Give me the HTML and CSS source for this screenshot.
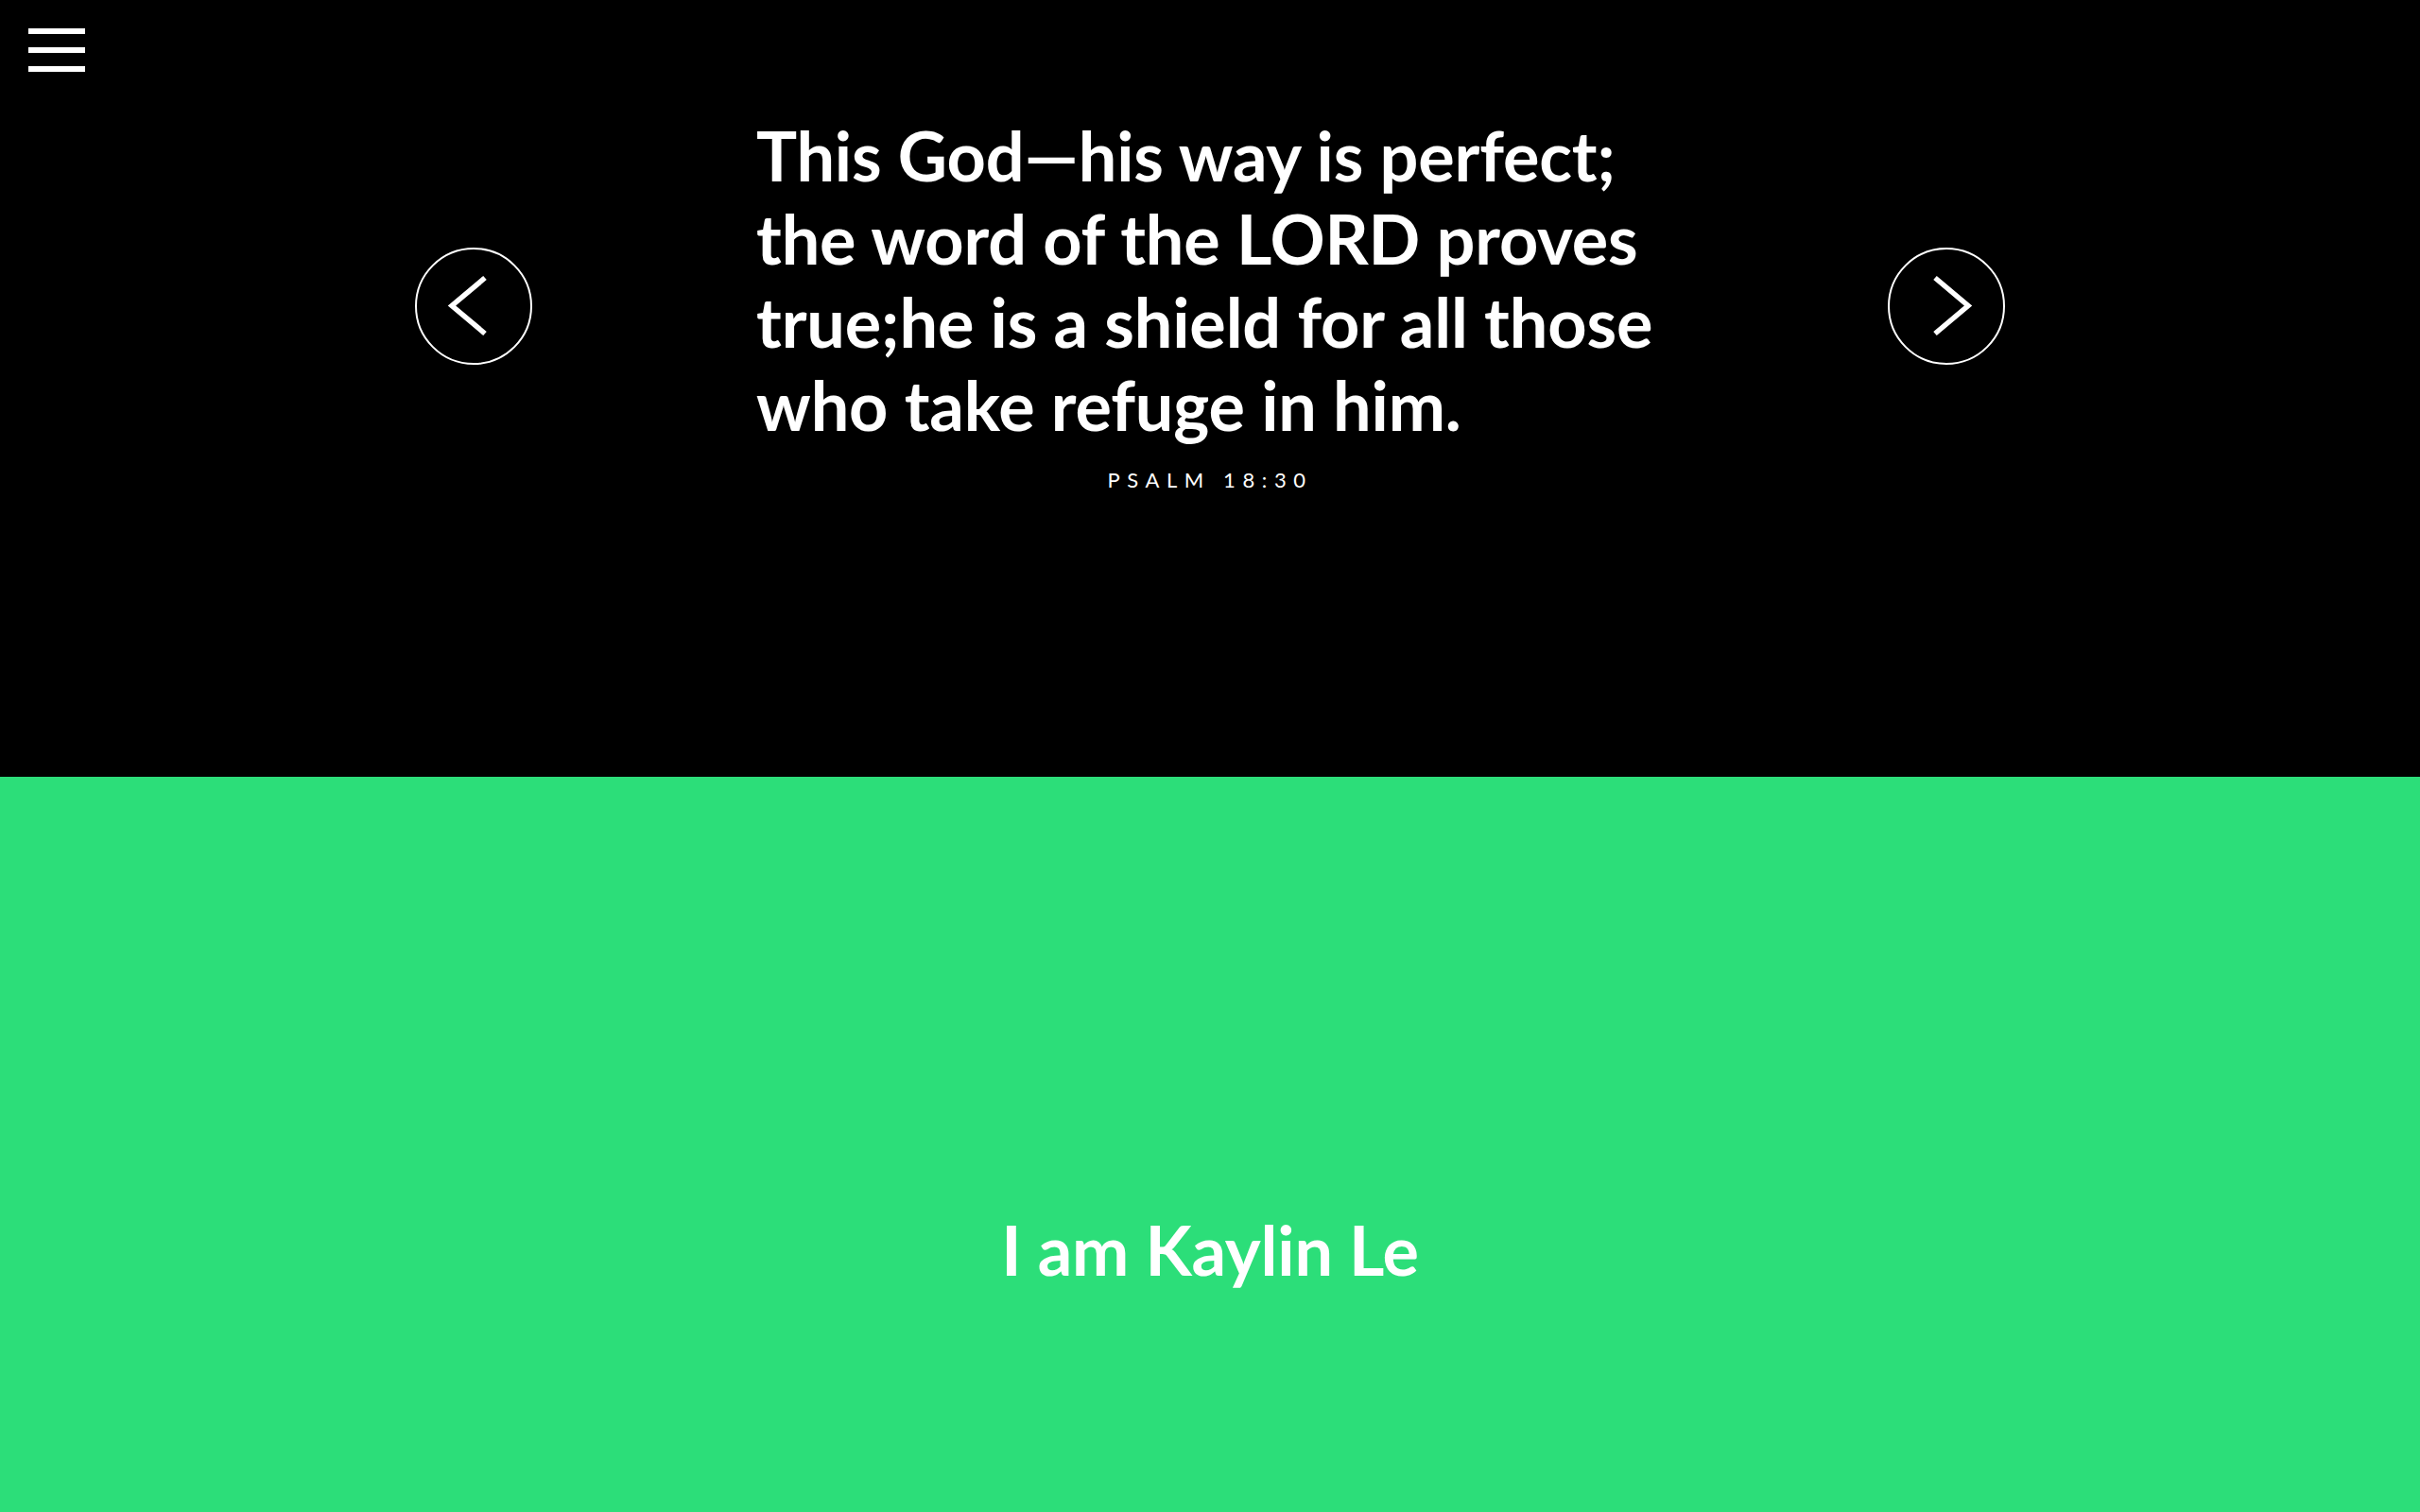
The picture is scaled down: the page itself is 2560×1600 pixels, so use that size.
FILE: index.html
```html
<!DOCTYPE html>
<html lang="en">
<head>
<meta charset="utf-8">
<title>Kaylin Le</title>
<link rel="stylesheet" href="styles.css">
</head>
<body>
<button class="menu-btn" aria-label="Menu">
  <span class="menu-bar"></span>
  <span class="menu-bar"></span>
  <span class="menu-bar"></span>
</button>
<section class="hero">
  <div class="slider">
    <button class="arrow" aria-label="Previous">
      <svg viewBox="0 0 124 124" width="124" height="124"><polyline points="74,32 39,61.5 74,91" fill="none" stroke="#fff" stroke-width="5.5"/></svg>
    </button>
    <div class="verse">
      <p class="verse-text">This God—his way is perfect; the word of the LORD proves true;he is a shield for all those who take refuge in him.</p>
      <p class="verse-ref">PSALM 18:30</p>
    </div>
    <button class="arrow" aria-label="Next">
      <svg viewBox="0 0 124 124" width="124" height="124"><polyline points="50,32 85,61.5 50,91" fill="none" stroke="#fff" stroke-width="5.5"/></svg>
    </button>
  </div>
</section>
<section class="intro">
  <h1 class="intro-title">I am Kaylin Le</h1>
</section>
</body>
</html>
```

FILE: styles.css
```css
* { box-sizing: border-box; }
html, body { margin: 0; padding: 0; }
body {
  font-family: Lato, "Open Sans", sans-serif;
  background: #000;
  color: #fff;
}
.menu-btn {
  position: fixed;
  top: 30px;
  left: 30px;
  width: 60px;
  padding: 0;
  border: 0;
  background: transparent;
  display: flex;
  flex-direction: column;
  gap: 14px;
  cursor: pointer;
  z-index: 10;
}
.menu-bar {
  display: block;
  width: 60px;
  height: 6px;
  background: #fff;
}
.hero {
  background: #000;
  height: 822px;
  padding-top: 120px;
}
.slider {
  display: flex;
  justify-content: center;
  align-items: center;
  gap: 237px;
}
.arrow {
  width: 124px;
  height: 124px;
  flex: 0 0 124px;
  border: 2px solid #fff;
  border-radius: 50%;
  background: transparent;
  padding: 0;
  position: relative;
  cursor: pointer;
}
.arrow svg {
  position: absolute;
  top: -2px;
  left: -2px;
}
.verse {
  width: 960px;
  padding-bottom: 6px;
}
.verse-text {
  margin: 0;
  font-size: 72px;
  line-height: 88px;
  font-weight: 700;
  letter-spacing: -0.15px;
  text-align: left;
}
.verse-ref {
  margin: 22px 0 0;
  font-size: 22px;
  font-weight: 400;
  letter-spacing: 7.6px;
  text-align: center;
}
.intro {
  background: #2cde79;
  height: 778px;
  padding-top: 457px;
  text-align: center;
}
.intro-title {
  margin: 0;
  font-size: 72px;
  line-height: normal;
  font-weight: 700;
  letter-spacing: -0.2px;
  color: #fff;
}
```
